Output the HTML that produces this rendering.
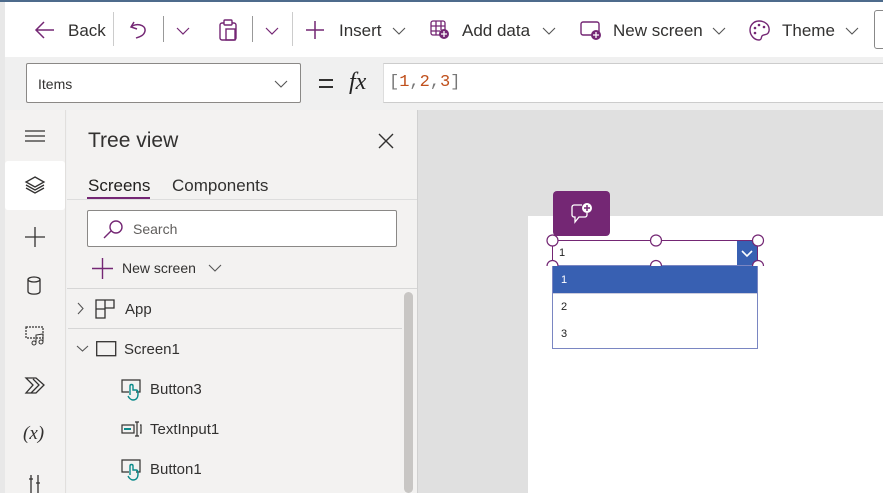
<!DOCTYPE html>
<html><head><style>
*{box-sizing:border-box;margin:0;padding:0}
body{width:883px;height:493px;overflow:hidden;background:#f0f0f0;font-family:"Liberation Sans",sans-serif;color:#323130;position:relative}
.a{position:absolute}
.t{font-size:17px;color:#323130}
svg{position:absolute;overflow:visible}
</style></head><body>
<div class="a" style="left:0;top:0;width:883px;height:2px;background:#4d6b8c"></div>
<div class="a" style="left:0;top:2px;width:5px;height:491px;background:#e8e8e8"></div>
<div class="a" style="left:5px;top:2px;width:878px;height:55px;background:#fff"></div>
<!-- toolbar -->
<svg style="left:35px;top:21px" width="20" height="18"><path d="M1 9H19M9 1L1 9L9 17" fill="none" stroke="#742774" stroke-width="1.5"/></svg>
<div class="a t" style="left:68px;top:21px">Back</div>
<div class="a" style="left:113px;top:12px;width:1px;height:34px;background:#ccc"></div>
<svg style="left:130px;top:20px" width="18" height="20"><path d="M4 2L1 7L7 9M1 7C5 3 16 4 15 11C14 16 9 17 6 18" fill="none" stroke="#742774" stroke-width="1.5"/></svg>
<div class="a" style="left:163px;top:16px;width:1px;height:26px;background:#999"></div>
<svg style="left:176px;top:27px" width="14" height="8"><path d="M1 1L7 7L13 1" fill="none" stroke="#742774" stroke-width="1.2"/></svg>
<svg style="left:219px;top:19px" width="18" height="22"><rect x="1" y="4" width="16" height="17" rx="2" fill="none" stroke="#742774" stroke-width="1.4"/><rect x="5" y="1" width="8" height="5" rx="1" fill="#fff" stroke="#742774" stroke-width="1.4"/><rect x="7" y="10" width="9" height="11" fill="none" stroke="#742774" stroke-width="1.4"/></svg>
<div class="a" style="left:252px;top:16px;width:1px;height:26px;background:#999"></div>
<svg style="left:265px;top:27px" width="14" height="8"><path d="M1 1L7 7L13 1" fill="none" stroke="#742774" stroke-width="1.2"/></svg>
<div class="a" style="left:292px;top:12px;width:1px;height:34px;background:#ccc"></div>
<svg style="left:306px;top:21px" width="18" height="18"><path d="M9 0V18M0 9H18" stroke="#742774" stroke-width="1.5"/></svg>
<div class="a t" style="left:339px;top:21px">Insert</div>
<svg style="left:392px;top:27px" width="14" height="8"><path d="M1 1L7 7L13 1" fill="none" stroke="#555" stroke-width="1.1"/></svg>
<svg style="left:430px;top:20px" width="20" height="20"><rect x="1" y="1" width="14" height="14" rx="2" fill="none" stroke="#742774" stroke-width="1.3"/><path d="M1 6H15M1 11H10M6 1V15M11 1V10" stroke="#742774" stroke-width="1.3"/><circle cx="14" cy="14" r="5" fill="#742774"/><path d="M14 11V17M11 14H17" stroke="#fff" stroke-width="1.3"/></svg>
<div class="a t" style="left:462px;top:21px">Add data</div>
<svg style="left:542px;top:27px" width="14" height="8"><path d="M1 1L7 7L13 1" fill="none" stroke="#555" stroke-width="1.1"/></svg>
<svg style="left:580px;top:21px" width="22" height="20"><rect x="1" y="1" width="18" height="13" rx="2" fill="none" stroke="#742774" stroke-width="1.4"/><circle cx="16" cy="14" r="5" fill="#742774"/><path d="M16 11V17M13 14H19" stroke="#fff" stroke-width="1.3"/></svg>
<div class="a t" style="left:613px;top:21px">New screen</div>
<svg style="left:712px;top:27px" width="14" height="8"><path d="M1 1L7 7L13 1" fill="none" stroke="#555" stroke-width="1.1"/></svg>
<svg style="left:749px;top:20px" width="21" height="21"><path d="M10 1C4 1 1 6 1 10C1 15 5 20 10 20C13 20 12 17 13 16C14 14 19 16 20 11C21 5 16 1 10 1Z" fill="none" stroke="#742774" stroke-width="1.4"/><circle cx="6" cy="8" r="1.3" fill="#742774"/><circle cx="10" cy="5" r="1.3" fill="#742774"/><circle cx="15" cy="7" r="1.3" fill="#742774"/><circle cx="6" cy="13" r="1.3" fill="#742774"/></svg>
<div class="a t" style="left:782px;top:21px">Theme</div>
<svg style="left:845px;top:27px" width="14" height="8"><path d="M1 1L7 7L13 1" fill="none" stroke="#555" stroke-width="1.1"/></svg>
<div class="a" style="left:874px;top:10px;width:20px;height:39px;border:1px solid #888;border-radius:3px"></div>
<!-- formula bar -->
<div class="a" style="left:26px;top:63px;width:275px;height:40px;background:#fff;border:1px solid #8a8886;border-radius:2px"></div>
<div class="a" style="left:38px;top:76px;font-size:14px">Items</div>
<svg style="left:274px;top:80px" width="14" height="8"><path d="M1 1L7 7L13 1" fill="none" stroke="#555" stroke-width="1.1"/></svg>
<div class="a" style="left:319px;top:79px;width:14px;height:2px;background:#323130"></div>
<div class="a" style="left:319px;top:86px;width:14px;height:2px;background:#323130"></div>
<div class="a" style="left:349px;top:69px;font-family:'Liberation Serif',serif;font-style:italic;font-size:24px;color:#222">fx</div>
<div class="a" style="left:383px;top:63px;width:500px;height:40px;background:#fff;border-top:1px solid #ccc;border-bottom:1px solid #ccc;border-left:1px solid #ddd"></div>
<div class="a" style="left:389px;top:73px;font-family:'Liberation Mono',monospace;font-size:17px;color:#777">[<span style="color:#c0501c">1</span>,<span style="color:#c0501c">2</span>,<span style="color:#c0501c">3</span>]</div>
<!-- left rail -->
<div class="a" style="left:5px;top:110px;width:61px;height:383px;background:#f3f2f1;border-right:1px solid #e1dfdd"></div>
<div class="a" style="left:5px;top:161px;width:60px;height:49px;background:#fff;border-radius:3px"></div>
<svg style="left:25px;top:130px" width="20" height="12"><path d="M0 1H20M0 6H20M0 11H20" stroke="#323130" stroke-width="1.2"/></svg>
<svg style="left:25px;top:176px" width="20" height="20"><path d="M10 1L19 6L10 11L1 6Z" fill="none" stroke="#323130" stroke-width="1.3"/><path d="M1 9L10 14L19 9M1 12L10 17L19 12" fill="none" stroke="#323130" stroke-width="1.3"/></svg>
<svg style="left:25px;top:227px" width="20" height="20"><path d="M10 0V20M0 10H20" stroke="#323130" stroke-width="1.3"/></svg>
<svg style="left:27px;top:276px" width="14" height="19"><ellipse cx="7" cy="3.5" rx="6" ry="2.5" fill="none" stroke="#323130" stroke-width="1.3"/><path d="M1 3.5V15.5C1 19 13 19 13 15.5V3.5" fill="none" stroke="#323130" stroke-width="1.3"/></svg>
<svg style="left:25px;top:326px" width="20" height="20"><rect x="1" y="1" width="17" height="11" fill="none" stroke="#323130" stroke-width="1.2" stroke-dasharray="2 1"/><circle cx="9" cy="17" r="2" fill="none" stroke="#323130"/><circle cx="16" cy="16" r="2" fill="none" stroke="#323130"/><path d="M11 17V9L18 8V16" fill="none" stroke="#323130"/></svg>
<svg style="left:25px;top:377px" width="20" height="17"><path d="M1 1H11L19 8L11 16H1L8 8Z M6 16L14 8L8 2" fill="none" stroke="#323130" stroke-width="1.3"/></svg>
<div class="a" style="left:23px;top:423px;font-family:'Liberation Serif',serif;font-style:italic;font-size:19px">(x)</div>
<svg style="left:28px;top:475px" width="14" height="18"><path d="M3 0V18M10 0V18M1 4H5M8 8H12" stroke="#323130" stroke-width="1.3"/></svg>
<!-- tree panel -->
<div class="a" style="left:67px;top:110px;width:350px;height:383px;background:#f3f2f1"></div>
<div class="a" style="left:88px;top:129px;font-size:21px;color:#323130">Tree view</div>
<svg style="left:378px;top:133px" width="16" height="16"><path d="M1 1L15 15M15 1L1 15" stroke="#323130" stroke-width="1.4"/></svg>
<div class="a" style="left:88px;top:176px;font-size:17px;color:#201f1e">Screens</div>
<div class="a" style="left:87px;top:197px;width:63px;height:3px;background:#742774"></div>
<div class="a" style="left:172px;top:176px;font-size:17px;color:#323130">Components</div>
<div class="a" style="left:67px;top:199px;width:350px;height:1px;background:#ddd"></div>
<div class="a" style="left:87px;top:210px;width:310px;height:37px;background:#fff;border:1px solid #8a8886;border-radius:2px"></div>
<svg style="left:103px;top:219px" width="22" height="20"><circle cx="13" cy="8" r="6" fill="none" stroke="#742774" stroke-width="1.4"/><path d="M8 12L1 19" stroke="#742774" stroke-width="1.4"/></svg>
<div class="a" style="left:133px;top:221px;font-size:14px;color:#605e5c">Search</div>
<svg style="left:92px;top:258px" width="21" height="21"><path d="M10.5 0V21M0 10.5H21" stroke="#742774" stroke-width="1.4"/></svg>
<div class="a" style="left:122px;top:260px;font-size:14px">New screen</div>
<svg style="left:208px;top:264px" width="14" height="8"><path d="M1 1L7 7L13 1" fill="none" stroke="#555" stroke-width="1.1"/></svg>
<div class="a" style="left:67px;top:288px;width:350px;height:1px;background:#d6d6d6"></div>
<div class="a" style="left:404px;top:292px;width:9px;height:201px;background:#c8c6c4;border-radius:5px"></div>
<svg style="left:77px;top:302px" width="7" height="13"><path d="M1 1L6 6.5L1 12" fill="none" stroke="#555" stroke-width="1.1"/></svg>
<svg style="left:95px;top:299px" width="20" height="20"><path d="M1 1H19V9H10V19H1Z M1 10H10M10 1V9" fill="none" stroke="#323130" stroke-width="1.3"/></svg>
<div class="a" style="left:125px;top:301px;font-size:15px">App</div>
<div class="a" style="left:68px;top:328px;width:334px;height:1px;background:#d6d6d6"></div>
<svg style="left:76px;top:345px" width="13" height="7"><path d="M1 1L6.5 6L12 1" fill="none" stroke="#555" stroke-width="1.1"/></svg>
<svg style="left:96px;top:341px" width="21" height="16"><rect x="0.7" y="0.7" width="19" height="14" fill="none" stroke="#323130" stroke-width="1.3"/></svg>
<div class="a" style="left:124px;top:341px;font-size:15px">Screen1</div>
<svg style="left:121px;top:379px" width="22" height="22"><path d="M8 13H1V1H19V13H15" fill="none" stroke="#323130" stroke-width="1.2"/><path d="M9 16V7C9 5 12 5 12 7V11L15 11C17 11 17 13 17 15C17 19 15 21 12 21C10 21 8 19 7 17" fill="none" stroke="#0b8a8a" stroke-width="1.4"/></svg>
<div class="a" style="left:150px;top:381px;font-size:15px">Button3</div>
<svg style="left:121px;top:421px" width="22" height="16"><rect x="1" y="4" width="12" height="8" fill="none" stroke="#323130" stroke-width="1.2"/><rect x="3" y="7" width="7" height="2" fill="#0b8a8a"/><path d="M14 1H18M16 1V15M14 15H18M19 4H20V12H19" fill="none" stroke="#323130" stroke-width="1.2"/></svg>
<div class="a" style="left:150px;top:421px;font-size:15px">TextInput1</div>
<svg style="left:121px;top:459px" width="22" height="22"><path d="M8 13H1V1H19V13H15" fill="none" stroke="#323130" stroke-width="1.2"/><path d="M9 16V7C9 5 12 5 12 7V11L15 11C17 11 17 13 17 15C17 19 15 21 12 21C10 21 8 19 7 17" fill="none" stroke="#0b8a8a" stroke-width="1.4"/></svg>
<div class="a" style="left:150px;top:461px;font-size:15px">Button1</div>
<!-- canvas -->
<div class="a" style="left:417px;top:110px;width:466px;height:383px;background:#e0e0e0;border-left:1px solid #d0d0d0"></div>
<div class="a" style="left:528px;top:216px;width:355px;height:277px;background:#fff"></div>
<div class="a" style="left:553px;top:191px;width:57px;height:45px;background:#742774;border-radius:4px"></div>
<svg style="left:571px;top:202px" width="22" height="22"><path d="M11 3H3C2 3 1 4 1 5V13C1 14 2 15 3 15H4V20L8 15H14C15 15 16 14 16 13V11" fill="none" stroke="#fff" stroke-width="1.3"/><circle cx="16" cy="6" r="5" fill="#fff"/><path d="M16 3V9M13 6H19" stroke="#742774" stroke-width="1.5"/></svg>
<div class="a" style="left:552px;top:240px;width:206px;height:26px;border:1px solid #742774;background:#fff"></div>
<div class="a" style="left:559px;top:247px;font-size:11px;color:#222">1</div>
<div class="a" style="left:737px;top:241px;width:20px;height:24px;background:#3860b2"></div>
<svg style="left:741px;top:250px" width="12" height="7"><path d="M1 1L6 6L11 1" fill="none" stroke="#fff" stroke-width="1.6"/></svg>
<div class="a" style="left:552px;top:265px;width:206px;height:84px;background:#fff;border:1px solid #7a86c2"></div>
<div class="a" style="left:553px;top:266px;width:204px;height:27px;background:#3860b2"></div>
<div class="a" style="left:561px;top:274px;font-size:11px;color:#fff">1</div>
<div class="a" style="left:553px;top:293px;width:204px;height:1px;background:#ccd"></div>
<div class="a" style="left:561px;top:301px;font-size:11px;color:#222">2</div>
<div class="a" style="left:561px;top:328px;font-size:11px;color:#222">3</div>
<svg style="left:540px;top:233px" width="230" height="40">
<g fill="#fff" stroke="#742774" stroke-width="1.2">
<circle cx="12.5" cy="7.5" r="5.5"/><circle cx="116" cy="7.5" r="5.5"/><circle cx="218" cy="7.5" r="5.5"/>
<path d="M7 33A5.5 5.5 0 0 1 18 33"/><path d="M110.5 33A5.5 5.5 0 0 1 121.5 33"/><path d="M212.5 33A5.5 5.5 0 0 1 223.5 33"/>
</g></svg>
</body></html>
